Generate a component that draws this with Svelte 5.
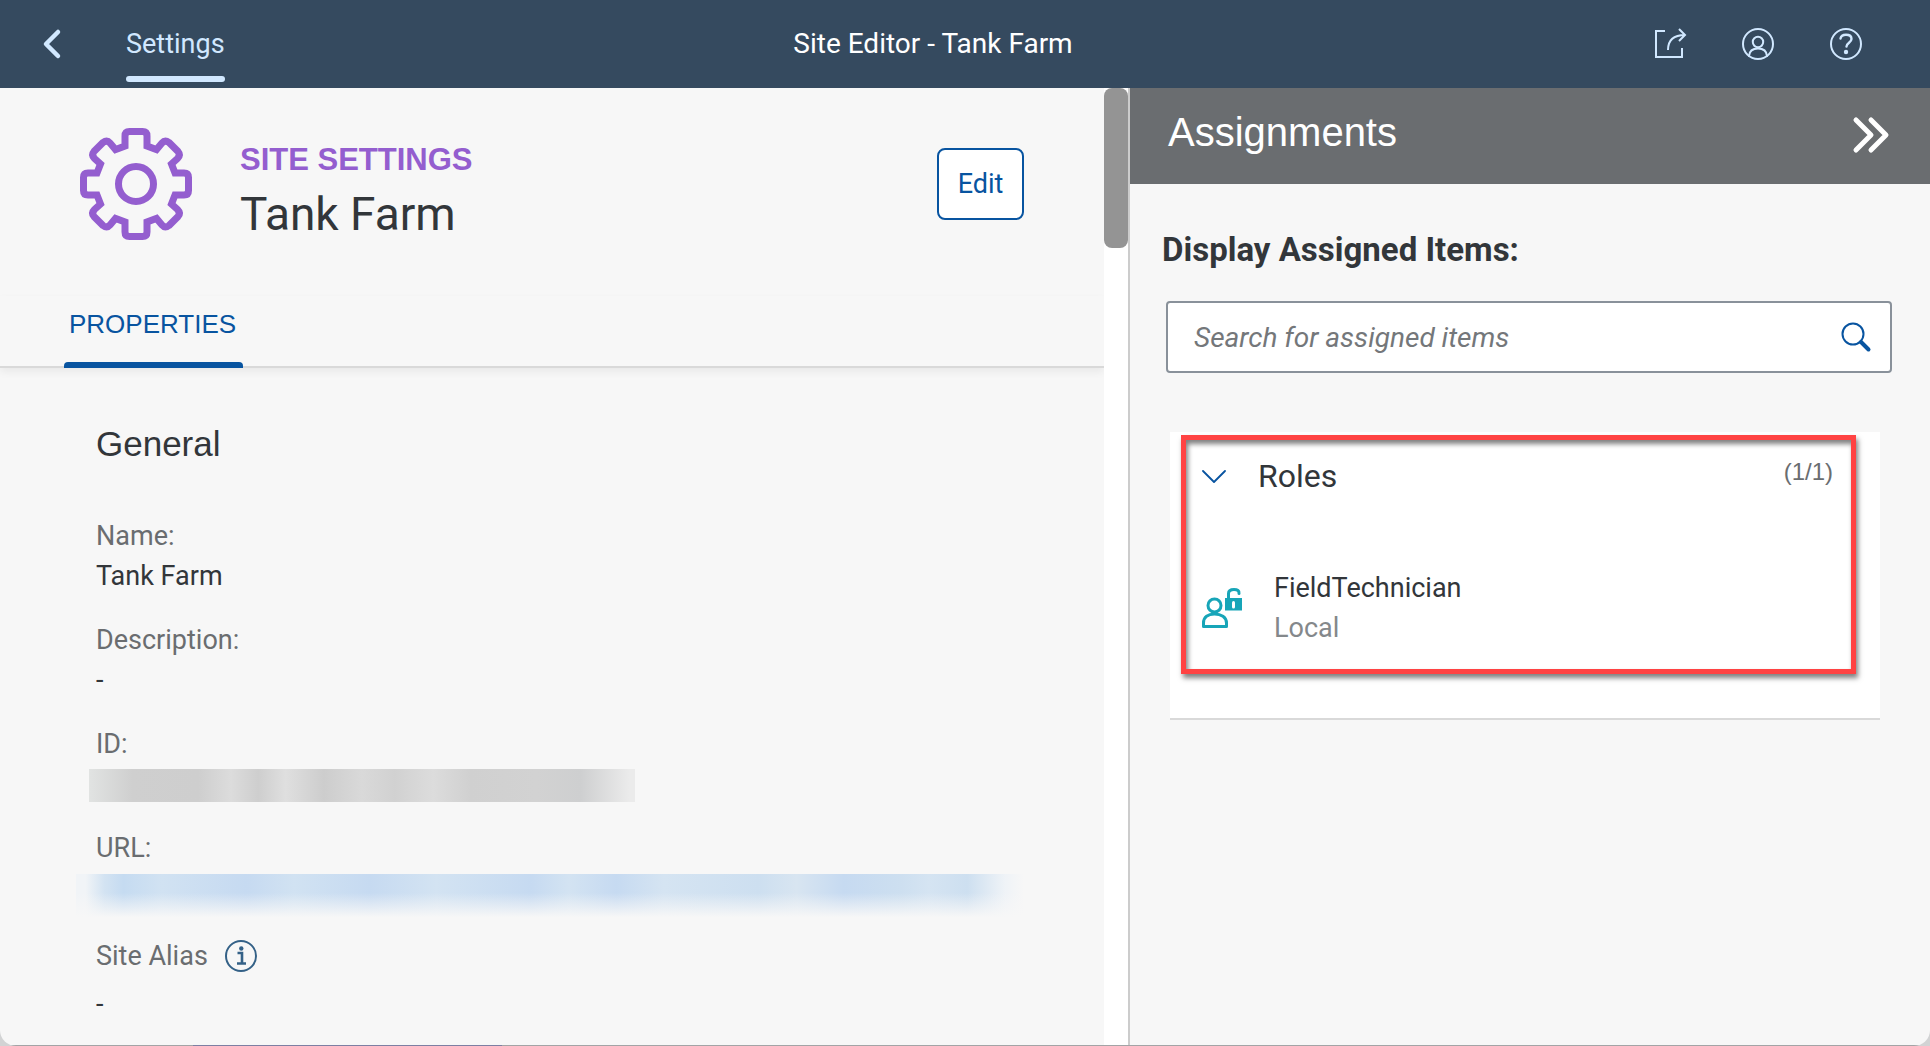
<script>
  const actions = ['Share', 'User', 'Help'];
</script>

<div class="window">
  <header class="shell">
    <div class="lead">
      <button class="icon" aria-label="Back">
        <svg width="40" height="40" viewBox="0 0 40 40"><path d="M26 8 14 20 26 32" stroke-width="4.500" /></svg>
      </button>
      <a class="nav" href="#settings">Settings</a>
    </div>
    <h1>Site Editor - Tank Farm</h1>
    <div class="actions">
      {#each actions as name}
        <button class="icon" aria-label={name}>
          <svg width="40" height="40" viewBox="0 0 40 40">
            {#if name === 'Share'}
              <path class="sharp" d="M15 7H6V33H32V24M18 26C18 16 23 11 35 11M29 5 35 11 29 17" />
            {:else if name === 'User'}
              <circle cx="20" cy="20" r="15" /><circle cx="20" cy="18" r="5.200" />
              <path d="M11 32C11.500 26 15 24.500 20 24.500S28.500 26 29 32" />
            {:else}
              <circle cx="20" cy="20" r="15" />
              <path d="M14.500 14.500C15 11.500 17 10.800 20 10.800C23.500 10.800 25.500 12.500 25.500 15C25.500 18.500 20.500 19 20.500 22.500" stroke-width="2.400" />
              <circle class="dot" cx="20" cy="28" r="2.200" />
            {/if}
          </svg>
        </button>
      {/each}
    </div>
  </header>

  <main>
    <section class="site">
      <div class="hero">
        <svg class="gear" width="112" height="112" viewBox="0 0 112 112">
          <path d="M45 18V8Q45 3.500 49.500 3.500H62.500Q67 3.500 67 8V18L76.500 21.500L82 15Q85 11.500 89 14.500L98 23.500Q101 27 97.500 30.500L91.500 36L95 45H104Q108.500 45 108.500 49.500V62.500Q108.500 67 104 67H95L91.500 76L97.500 81.500Q101 85 98 88.500L89 97.500Q85 100.500 82 97L76.500 90.500L67 94V104Q67 108.500 62.500 108.500H49.500Q45 108.500 45 104V94L35.500 90.500L30 97Q27 100.500 23 97.500L14 88.500Q11 85 14.500 81.500L20.500 76L17 67H8Q3.500 67 3.500 62.500V49.500Q3.500 45 8 45H17L20.500 36L14.500 30.500Q11 27 14 23.500L23 14.500Q27 11.500 30 15L35.500 21.500Z" />
          <circle cx="56" cy="56" r="17.500" />
        </svg>
        <div class="names">
          <p class="kicker">SITE SETTINGS</p>
          <h2>Tank Farm</h2>
        </div>
        <button class="edit">Edit</button>
      </div>
      <nav class="tabs"><a href="#properties">PROPERTIES</a></nav>
      <div class="form">
        <h3>General</h3>
        <dl>
          <div><dt>Name:</dt><dd>Tank Farm</dd></div>
          <div><dt>Description:</dt><dd>-</dd></div>
          <div><dt>ID:</dt><dd><span class="hidden-id"></span></dd></div>
          <div><dt>URL:</dt><dd><span class="hidden-url"></span></dd></div>
          <div class="alias">
            <dt>Site Alias
              <svg width="34" height="34" viewBox="0 0 34 34" aria-hidden="true">
                <circle cx="17" cy="17" r="15" />
                <path class="sharp" d="M13.500 14H18V24M13 24.500H22" stroke-width="2.600" /><circle class="dot" cx="17.300" cy="9.500" r="2.200" />
              </svg>
            </dt>
            <dd>-</dd>
          </div>
        </dl>
      </div>
    </section>

    <div class="track"><div class="thumb"></div></div>

    <aside>
      <div class="bar">
        <h2>Assignments</h2>
        <button class="icon" aria-label="Collapse panel">
          <svg width="40" height="40" viewBox="0 0 40 40"><path d="M5 5 20 20 5 35M20 5 35 20 20 35" stroke-width="5" /></svg>
        </button>
      </div>
      <div class="panel">
        <label for="search">Display Assigned Items:</label>
        <div class="search">
          <input id="search" type="text" placeholder="Search for assigned items" />
          <button class="icon" aria-label="Search">
            <svg width="40" height="40" viewBox="0 0 40 40"><circle cx="17" cy="17" r="10.500" stroke-width="2" /><path d="M25 25 32.500 32.500" stroke-width="4" /></svg>
          </button>
        </div>
        <div class="card">
          <div class="marked">
            <div class="group">
              <button class="toggle" aria-expanded="true">
                <svg width="24" height="16" viewBox="0 0 24 16"><path d="M1 3 12 14 23 3" stroke-width="1.800" /></svg>
                <span>Roles</span>
              </button>
              <span class="count">(1/1)</span>
            </div>
            <div class="role">
              <svg width="40" height="40" viewBox="0 0 40 40" aria-hidden="true">
                <circle cx="12.500" cy="17.500" r="6.500" />
                <path d="M1.500 38.500V35C1.500 29 6 26 12.500 26S24.500 29 24.500 35V38.500Z" />
                <path d="M26.500 12V5.500Q26.500 1.500 32 1.500T37 5.500" />
                <rect class="dot" x="23" y="10" width="17" height="12.500" />
                <path class="key" d="M31.500 14.500V19" />
              </svg>
              <div><p>FieldTechnician</p><p class="sub">Local</p></div>
            </div>
          </div>
        </div>
      </div>
    </aside>
  </main>
  <div class="edge"></div>
</div>

<style>
  :global(body) { margin: 0; background: #d2d3d4; }
  .window, .window * { box-sizing: border-box; }
  .window {
    display: flex; flex-direction: column; min-height: 100vh; overflow: hidden;
    border-radius: 0 0 16px 16px;
    background: #f7f7f7; color: #32363a;
    font: 27px/40px Roboto, "Liberation Sans", sans-serif;
  }
  .edge { height: 1px; background: linear-gradient(90deg, #a3a4a6 10%, #7d7fa3 10% 26%, #a3a4a6 26%); }
  h1, h2, h3, p, dl, dd { margin: 0; font-weight: 400; }
  button { padding: 0; border: 0; background: none; color: inherit; font: inherit; cursor: pointer; }
  a { color: inherit; text-decoration: none; }
  svg { display: block; flex: none; fill: none; stroke: currentColor; stroke-width: 2; stroke-linecap: round; stroke-linejoin: round; }
  .dot { fill: currentColor; stroke: none; }
  .sharp { stroke-linecap: butt; stroke-linejoin: miter; }

  .shell {
    display: grid; grid-template-columns: 1fr auto 1fr; height: 88px;
    padding-right: 64px; background: #354a5f; color: #d1e8ff;
  }
  .shell h1 { color: #fff; font-size: 28px; line-height: 88px; }
  .lead, .actions { display: flex; align-items: center; }
  .lead { gap: 54px; padding-left: 32px; }
  .nav { height: 88px; line-height: 88px; }
  .nav::after { content: ""; display: block; height: 6px; margin-top: -12px; border-radius: 3px; background: currentColor; }
  .actions { justify-content: flex-end; gap: 48px; }

  main { display: grid; grid-template-columns: 1104fr 24px 802fr; flex: 1; }
  .hero { display: flex; align-items: flex-start; gap: 48px; height: 208px; padding: 40px 80px; }
  .gear { color: #945ecf; stroke-width: 7; stroke-linejoin: miter; }
  .names { flex: 1; padding-top: 12px; }
  .kicker { color: #945ecf; font: 700 31px/40px "Liberation Sans", Arial, sans-serif; }
  .names h2 { font-size: 46px; line-height: 68px; }
  .edit { width: 87px; height: 72px; margin-top: 20px; border: 2px solid #0854a0; border-radius: 8px; background: #fff; color: #0854a0; }
  .tabs { height: 72px; padding: 0 64px; border-bottom: 2px solid #d9d9d9; box-shadow: 0 4px 8px #0000000f; }
  .tabs a {
    display: inline-flex; flex-direction: column; justify-content: space-between; height: 72px; padding-top: 8px;
    color: #0854a0; font: 26px/40px "Liberation Sans", Arial, sans-serif; text-indent: 5px; 
  }
  .tabs a { min-width: 179px; }
  .tabs a::after { content: ""; height: 6px; border-radius: 4px 4px 0 0; background: currentColor; }
  .form { padding: 52px 80px 16px 96px; }
  .form h3 { font: 35px/48px "Liberation Sans", Arial, sans-serif; }
  dl { display: flex; flex-direction: column; gap: 24px; padding-top: 48px; }
  dt { display: flex; align-items: center; gap: 16px; color: #6a6d70; }
  dt svg { color: #346187; }
  dd { display: flow-root; height: 40px; }
  .alias { padding-top: 4px; }
  .alias dd { padding-top: 8px; }
  .hidden-id, .hidden-url { display: block; }
  .hidden-id {
    width: 546px; height: 33px; margin: 5px 0 0 -7px;
    background: linear-gradient(90deg, #e1e3e2, #cfcfcf 8%, #cecece 20%, #dcdcdc 26%, #cecece 31%, #dfdfdf 36%, #cdcdcd 43%, #d9d9d9 50%, #d1d1d1 56%, #dcdcdc 63%, #d0d0d0 70%, #d2d2d2 82%, #cecfd0 90%, #ebebeb 99%);
  }
  .hidden-url {
    height: 54px; margin: 6px 0 0 -20px;
    background:
      linear-gradient(180deg, #f7f7f700 0 35%, #f7f7f7 80%),
      linear-gradient(90deg, #f1f4f7 1%, #d3e3f2 3%, #c5dbf1 5%, #d1e2f2 9%, #c6daf1 18%, #d1e2f2 23%, #c6daf1 31%, #d3e3f2 38%, #c6daf1 48%, #d3e3f2 52%, #c6daf1 57%, #d5e4f2 62%, #cddff0 72%, #d8e5f1 76%, #c6daf1 81%, #cddff0 87%, #d5e4f2 90%, #cddff0 94%, #eff3f7 98%, #f7f7f7);
  }

  .track { background: #fff; }
  .thumb { height: 160px; border-radius: 8px; background: #949494; }

  aside { border-left: 2px solid #ccc; }
  .bar { display: flex; align-items: center; justify-content: space-between; height: 96px; padding: 0 39px 2px 38px; background: #6a6d70; color: #fff; }
  .bar h2 { padding-bottom: 6px; font: 40px/48px "Liberation Sans", Arial, sans-serif; }
  .panel { padding: 46px 38px 0 36px; }
  label { display: block; padding-bottom: 31px; margin-left: -4px; font-size: 33px; font-weight: 700; }
  .search { display: flex; align-items: center; height: 72px; padding: 0 14px 0 26px; border: 2px solid #89919a; border-radius: 4px; background: #fff; color: #0854a0; }
  input { flex: 1; min-width: 0; height: 68px; padding: 0; border: 0; outline: 0; background: none; color: #32363a; font: inherit; font-size: 28px; }
  input::placeholder { color: #74777a; font-style: italic; opacity: 1; }
  .card { height: 288px; margin: 59px 12px 0 4px; padding: 3px 24px 0 11px; border-bottom: 2px solid #d9d9d9; background: #fff; }
  .marked { height: 239px; padding: 16px 18px 0 16px; border: 5px solid #ff4343; box-shadow: 2px 4px 5px #00000080, inset 2px 4px 5px #00000080; }
  .group { display: flex; justify-content: space-between; }
  .toggle { display: flex; align-items: center; gap: 32px; height: 40px; font-size: 32px; }
  .toggle svg { color: #0854a0; }
  .count { color: #6a6d70; font: 24px/32px "Liberation Sans", Arial, sans-serif; }
  .role { display: flex; align-items: center; gap: 32px; padding-top: 72px; }
  .role svg { color: #17a5b8; stroke-width: 3; }
  .role .key { stroke: #fff; }
  .sub { color: #84888b; }
</style>
